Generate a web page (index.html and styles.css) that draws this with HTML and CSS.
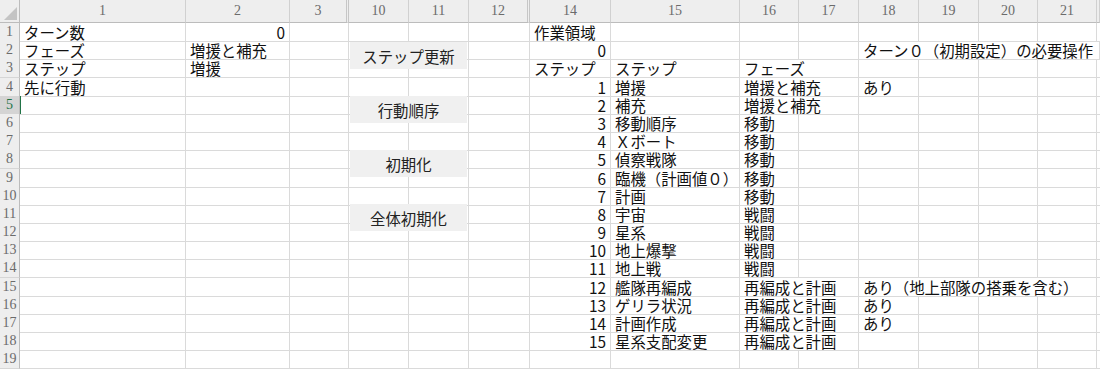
FILE: index.html
```html
<!DOCTYPE html>
<html lang="ja">
<head>
    <meta charset="UTF-8">
    <title>ターン管理シート</title>
    <link rel="stylesheet" href="styles.css">
</head>
<body>
    <div class="sheet">
        <div class="row hdr">
            <div class="corner"></div>
            <div class="ch">1</div><div class="ch">2</div><div class="ch hid">3</div>
            <div class="ch">10</div><div class="ch">11</div><div class="ch hid">12</div>
            <div class="ch">14</div><div class="ch">15</div><div class="ch">16</div><div class="ch">17</div>
            <div class="ch">18</div><div class="ch">19</div><div class="ch">20</div><div class="ch">21</div><div class="ch"></div>
        </div>

        <div class="row">
            <div class="rh">1</div>
            <div class="c">ターン数</div><div class="c num">0</div><div class="c"></div>
            <div class="c"></div><div class="c"></div><div class="c"></div>
            <div class="c">作業領域</div><div class="c"></div><div class="c"></div><div class="c"></div>
            <div class="c"></div><div class="c"></div><div class="c"></div><div class="c"></div><div class="c"></div>
        </div>
        <div class="row">
            <div class="rh">2</div>
            <div class="c">フェーズ</div><div class="c">増援と補充</div><div class="c"></div>
            <div class="c"></div><div class="c"></div><div class="c"></div>
            <div class="c num">0</div><div class="c"></div><div class="c"></div><div class="c"></div>
            <div class="c span5">ターン０（初期設定）の必要操作</div>
        </div>
        <div class="row">
            <div class="rh">3</div>
            <div class="c">ステップ</div><div class="c">増援</div><div class="c"></div>
            <div class="c"></div><div class="c"></div><div class="c"></div>
            <div class="c">ステップ</div><div class="c">ステップ</div><div class="c span2">フェーズ</div>
            <div class="c"></div><div class="c"></div><div class="c"></div><div class="c"></div><div class="c"></div>
        </div>
        <div class="row">
            <div class="rh">4</div>
            <div class="c">先に行動</div><div class="c"></div><div class="c"></div>
            <div class="c"></div><div class="c"></div><div class="c"></div>
            <div class="c num">1</div><div class="c">増援</div><div class="c span2">増援と補充</div>
            <div class="c">あり</div><div class="c"></div><div class="c"></div><div class="c"></div><div class="c"></div>
        </div>
        <div class="row">
            <div class="rh sel">5</div>
            <div class="c active"></div><div class="c"></div><div class="c"></div>
            <div class="c"></div><div class="c"></div><div class="c"></div>
            <div class="c num">2</div><div class="c">補充</div><div class="c span2">増援と補充</div>
            <div class="c"></div><div class="c"></div><div class="c"></div><div class="c"></div><div class="c"></div>
        </div>
        <div class="row">
            <div class="rh">6</div>
            <div class="c"></div><div class="c"></div><div class="c"></div>
            <div class="c"></div><div class="c"></div><div class="c"></div>
            <div class="c num">3</div><div class="c">移動順序</div><div class="c">移動</div><div class="c"></div>
            <div class="c"></div><div class="c"></div><div class="c"></div><div class="c"></div><div class="c"></div>
        </div>
        <div class="row">
            <div class="rh">7</div>
            <div class="c"></div><div class="c"></div><div class="c"></div>
            <div class="c"></div><div class="c"></div><div class="c"></div>
            <div class="c num">4</div><div class="c">Ｘボート</div><div class="c">移動</div><div class="c"></div>
            <div class="c"></div><div class="c"></div><div class="c"></div><div class="c"></div><div class="c"></div>
        </div>
        <div class="row">
            <div class="rh">8</div>
            <div class="c"></div><div class="c"></div><div class="c"></div>
            <div class="c"></div><div class="c"></div><div class="c"></div>
            <div class="c num">5</div><div class="c">偵察戦隊</div><div class="c">移動</div><div class="c"></div>
            <div class="c"></div><div class="c"></div><div class="c"></div><div class="c"></div><div class="c"></div>
        </div>
        <div class="row">
            <div class="rh">9</div>
            <div class="c"></div><div class="c"></div><div class="c"></div>
            <div class="c"></div><div class="c"></div><div class="c"></div>
            <div class="c num">6</div><div class="c">臨機（計画値０）</div><div class="c">移動</div><div class="c"></div>
            <div class="c"></div><div class="c"></div><div class="c"></div><div class="c"></div><div class="c"></div>
        </div>
        <div class="row">
            <div class="rh">10</div>
            <div class="c"></div><div class="c"></div><div class="c"></div>
            <div class="c"></div><div class="c"></div><div class="c"></div>
            <div class="c num">7</div><div class="c">計画</div><div class="c">移動</div><div class="c"></div>
            <div class="c"></div><div class="c"></div><div class="c"></div><div class="c"></div><div class="c"></div>
        </div>
        <div class="row">
            <div class="rh">11</div>
            <div class="c"></div><div class="c"></div><div class="c"></div>
            <div class="c"></div><div class="c"></div><div class="c"></div>
            <div class="c num">8</div><div class="c">宇宙</div><div class="c">戦闘</div><div class="c"></div>
            <div class="c"></div><div class="c"></div><div class="c"></div><div class="c"></div><div class="c"></div>
        </div>
        <div class="row">
            <div class="rh">12</div>
            <div class="c"></div><div class="c"></div><div class="c"></div>
            <div class="c"></div><div class="c"></div><div class="c"></div>
            <div class="c num">9</div><div class="c">星系</div><div class="c">戦闘</div><div class="c"></div>
            <div class="c"></div><div class="c"></div><div class="c"></div><div class="c"></div><div class="c"></div>
        </div>
        <div class="row">
            <div class="rh">13</div>
            <div class="c"></div><div class="c"></div><div class="c"></div>
            <div class="c"></div><div class="c"></div><div class="c"></div>
            <div class="c num">10</div><div class="c">地上爆撃</div><div class="c">戦闘</div><div class="c"></div>
            <div class="c"></div><div class="c"></div><div class="c"></div><div class="c"></div><div class="c"></div>
        </div>
        <div class="row">
            <div class="rh">14</div>
            <div class="c"></div><div class="c"></div><div class="c"></div>
            <div class="c"></div><div class="c"></div><div class="c"></div>
            <div class="c num">11</div><div class="c">地上戦</div><div class="c">戦闘</div><div class="c"></div>
            <div class="c"></div><div class="c"></div><div class="c"></div><div class="c"></div><div class="c"></div>
        </div>
        <div class="row">
            <div class="rh">15</div>
            <div class="c"></div><div class="c"></div><div class="c"></div>
            <div class="c"></div><div class="c"></div><div class="c"></div>
            <div class="c num">12</div><div class="c">艦隊再編成</div><div class="c span2">再編成と計画</div>
            <div class="c span4">あり（地上部隊の搭乗を含む）</div><div class="c"></div>
        </div>
        <div class="row">
            <div class="rh">16</div>
            <div class="c"></div><div class="c"></div><div class="c"></div>
            <div class="c"></div><div class="c"></div><div class="c"></div>
            <div class="c num">13</div><div class="c">ゲリラ状況</div><div class="c span2">再編成と計画</div>
            <div class="c">あり</div><div class="c"></div><div class="c"></div><div class="c"></div><div class="c"></div>
        </div>
        <div class="row">
            <div class="rh">17</div>
            <div class="c"></div><div class="c"></div><div class="c"></div>
            <div class="c"></div><div class="c"></div><div class="c"></div>
            <div class="c num">14</div><div class="c">計画作成</div><div class="c span2">再編成と計画</div>
            <div class="c">あり</div><div class="c"></div><div class="c"></div><div class="c"></div><div class="c"></div>
        </div>
        <div class="row">
            <div class="rh">18</div>
            <div class="c"></div><div class="c"></div><div class="c"></div>
            <div class="c"></div><div class="c"></div><div class="c"></div>
            <div class="c num">15</div><div class="c">星系支配変更</div><div class="c span2">再編成と計画</div>
            <div class="c"></div><div class="c"></div><div class="c"></div><div class="c"></div><div class="c"></div>
        </div>
        <div class="row">
            <div class="rh">19</div>
            <div class="c"></div><div class="c"></div><div class="c"></div>
            <div class="c"></div><div class="c"></div><div class="c"></div>
            <div class="c"></div><div class="c"></div><div class="c"></div><div class="c"></div>
            <div class="c"></div><div class="c"></div><div class="c"></div><div class="c"></div><div class="c"></div>
        </div>

        <!-- フォームボタン（セルの上に重なる） -->
        <div class="buttons">
            <button class="sheet-btn">ステップ更新</button>
            <button class="sheet-btn">行動順序</button>
            <button class="sheet-btn">初期化</button>
            <button class="sheet-btn">全体初期化</button>
        </div>
    </div>
</body>
</html>
```

FILE: styles.css
```css
:root {
    --grid-color: #dadada;
    --header-bg: #eeeeee;
    --header-line: #bcbcbc;
    --select-color: #217346;
}

body {
    margin: 0;
    padding: 0;
    background-color: white;
    font-family: "Noto Sans CJK JP", "Noto Sans", sans-serif;
    overflow: hidden;
}

.sheet {
    position: relative;
    width: 1100px;
    overflow: hidden;
}

.row {
    display: grid;
    grid-template-columns: 20px 166px 104px 59px 60px 60px 61px 81px 129px 59px 60px 60px 60px 59px 59px 1fr;
    height: 18.2px;
}

.row.hdr {
    height: 23px;
}

/* ヘッダー */
.corner,
.ch {
    background-color: var(--header-bg);
    border-right: 1px solid #d0d0d0;
    border-bottom: 1px solid var(--header-line);
    box-sizing: border-box;
}

.corner {
    position: relative;
    border-right-color: var(--header-line);
}

.corner::after {
    content: "";
    position: absolute;
    right: 2px;
    bottom: 2px;
    width: 0;
    height: 0;
    border-left: 13px solid transparent;
    border-bottom: 13px solid #c4c4c4;
}

.ch {
    font-family: "Liberation Serif", serif;
    font-size: 14px;
    line-height: 22px;
    color: #6b6b6b;
    text-align: center;
}

.ch.hid {
    border-right: 3px double #c6c6c6;
}

.rh {
    background-color: var(--header-bg);
    border-right: 1px solid var(--header-line);
    border-bottom: 1px solid #d6d6d6;
    box-sizing: border-box;
    font-family: "Liberation Serif", serif;
    font-size: 14px;
    line-height: 18px;
    color: #6b6b6b;
    text-align: center;
}

.rh.sel {
    background-color: #d4d4d4;
    color: var(--select-color);
}

/* セル */
.c {
    border-right: 1px solid var(--grid-color);
    border-bottom: 1px solid var(--grid-color);
    box-sizing: border-box;
    padding: 1px 3px 0 4px;
    font-size: 15.4px;
    line-height: 17px;
    color: #111;
    white-space: nowrap;
    min-width: 0;
}

.c.num {
    text-align: right;
    padding-right: 4px;
}

.c.active {
    box-shadow: inset 1px 0 0 var(--select-color);
}

.span2 {
    grid-column: span 2;
}

.span4 {
    grid-column: span 4;
}

.span5 {
    grid-column: span 5;
}

/* ボタン */
.buttons {
    position: absolute;
    left: 350px;
    top: 42px;
    display: flex;
    flex-direction: column;
    gap: 27px;
}

.sheet-btn {
    width: 117px;
    height: 27px;
    padding: 0;
    border: none;
    background-color: #f0f0f0;
    font-family: "Noto Sans CJK JP", sans-serif;
    font-size: 15.4px;
    color: #222;
    text-align: center;
}
```
